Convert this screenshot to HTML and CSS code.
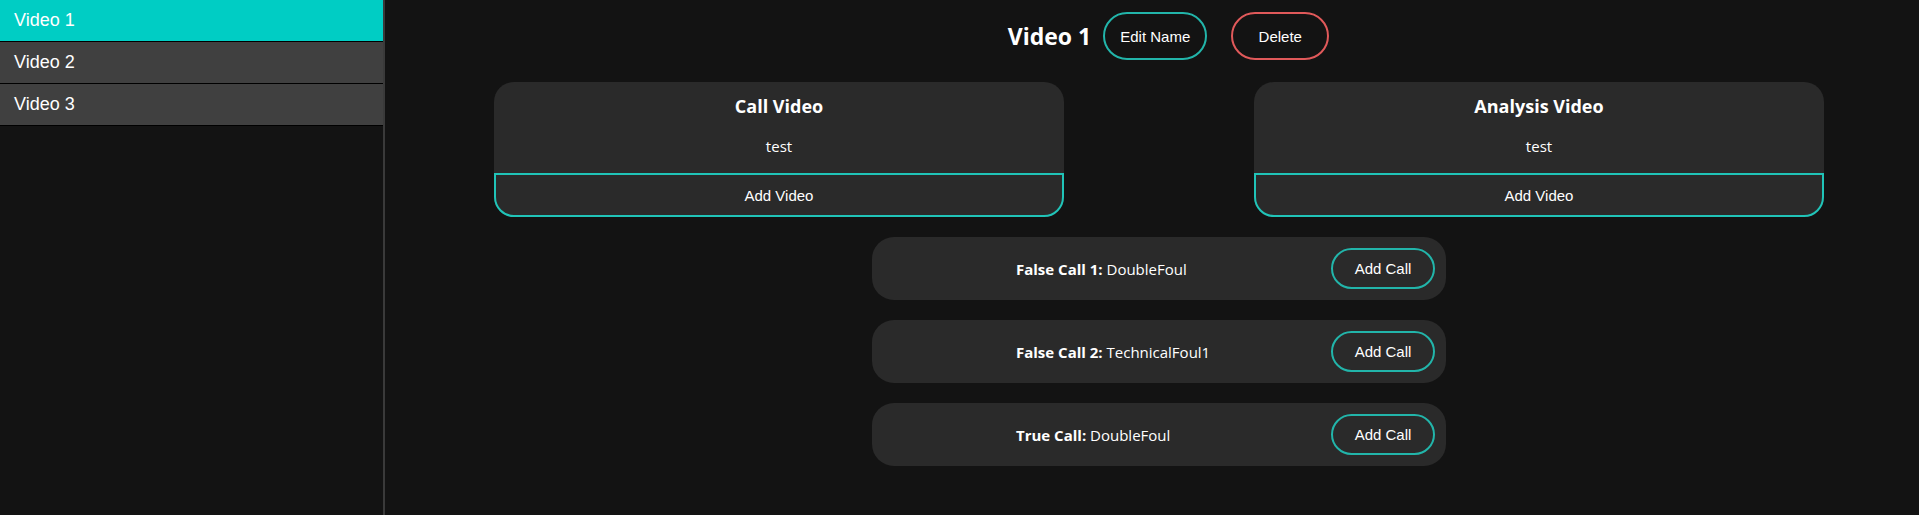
FILE: index.html
```html
<!DOCTYPE html>
<html>
<head>
<meta charset="utf-8">
<link rel="stylesheet" href="styles.css">
</head>
<body>
<div class="app">
  <aside class="sidebar">
    <div class="side-item active">Video 1</div>
    <div class="side-item">Video 2</div>
    <div class="side-item">Video 3</div>
  </aside>
  <main class="main">
    <div class="header">
      <h2 class="title">Video 1</h2>
      <button class="btn btn-edit">Edit Name</button>
      <button class="btn btn-delete">Delete</button>
    </div>
    <div class="cards">
      <div class="card">
        <h3 class="card-title">Call Video</h3>
        <div class="card-text">test</div>
        <button class="card-btn">Add Video</button>
      </div>
      <div class="card">
        <h3 class="card-title">Analysis Video</h3>
        <div class="card-text">test</div>
        <button class="card-btn">Add Video</button>
      </div>
    </div>
    <div class="calls">
      <div class="call-row">
        <div class="call-text"><b>False Call 1:</b> DoubleFoul</div>
        <button class="btn btn-call">Add Call</button>
      </div>
      <div class="call-row">
        <div class="call-text"><b>False Call 2:</b> TechnicalFoul1</div>
        <button class="btn btn-call">Add Call</button>
      </div>
      <div class="call-row">
        <div class="call-text"><b>True Call:</b> DoubleFoul</div>
        <button class="btn btn-call">Add Call</button>
      </div>
    </div>
  </main>
</div>
</body>
</html>
```

FILE: styles.css
```css
* { box-sizing: border-box; }
html, body {
  margin: 0;
  padding: 0;
  background: #131313;
  height: 100%;
}
.app {
  display: flex;
  height: 100vh;
  color: #ffffff;
}
.sidebar {
  width: 385px;
  flex: none;
  border-right: 2px solid #3a3a3a;
  background: #131313;
}
.side-item {
  font-family: "Liberation Sans", Arial, sans-serif;
  font-size: 18px;
  line-height: 21px;
  padding: 10px 14px;
  background: #404040;
  border-bottom: 1px solid #000;
  color: #fff;
}
.side-item.active {
  background: #00cdc4;
}
.main {
  flex: 1;
  padding: 12px 0 0 14px;
}
.header {
  display: flex;
  justify-content: center;
  align-items: center;
  height: 48px;
  padding-left: 19px;
}
.title {
  margin: 0 12px 0 0;
  font-family: "Open Sans", "Noto Sans", sans-serif;
  font-weight: 700;
  font-size: 23px;
}
.btn {
  font-family: "Liberation Sans", Arial, sans-serif;
  font-size: 15px;
  color: #fff;
  background: transparent;
  border: 2px solid #22b5aa;
  border-radius: 24px;
  padding: 0;
  cursor: pointer;
}
.btn-edit { width: 104px; height: 48px; }
.btn-delete { width: 98px; height: 48px; margin-left: 24px; border-color: #e0595a; }
.cards {
  display: flex;
  justify-content: space-around;
  margin-top: 22px;
}
.card {
  width: 570px;
  background: #2a2a2a;
  border-radius: 20px;
  display: flex;
  flex-direction: column;
  align-items: center;
  padding-top: 12px;
}
.card-title {
  margin: 0;
  font-family: "Open Sans", "Noto Sans", sans-serif;
  font-weight: 700;
  font-size: 18px;
  line-height: 25px;
}
.card-text {
  margin-top: 17px;
  font-family: "Open Sans", "Noto Sans", sans-serif;
  font-size: 15px;
  line-height: 20px;
}
.card-btn {
  margin-top: 17px;
  width: 100%;
  height: 44px;
  background: #2a2a2a;
  color: #fff;
  border: 2px solid #20c4b8;
  border-radius: 0 0 20px 20px;
  font-family: "Liberation Sans", Arial, sans-serif;
  font-size: 15px;
}
.calls {
  display: flex;
  flex-direction: column;
  align-items: center;
  gap: 20px;
  margin-top: 20px;
}
.call-row {
  width: 574px;
  height: 63px;
  background: #2a2a2a;
  border-radius: 22px;
  display: flex;
  align-items: center;
  padding: 0 11px 0 144px;
}
.call-text {
  flex: 1;
  font-family: "Open Sans", "Noto Sans", sans-serif;
  font-size: 15px;
}
.call-text b { font-weight: 700; }
.btn-call { width: 104px; height: 41px; }
```
